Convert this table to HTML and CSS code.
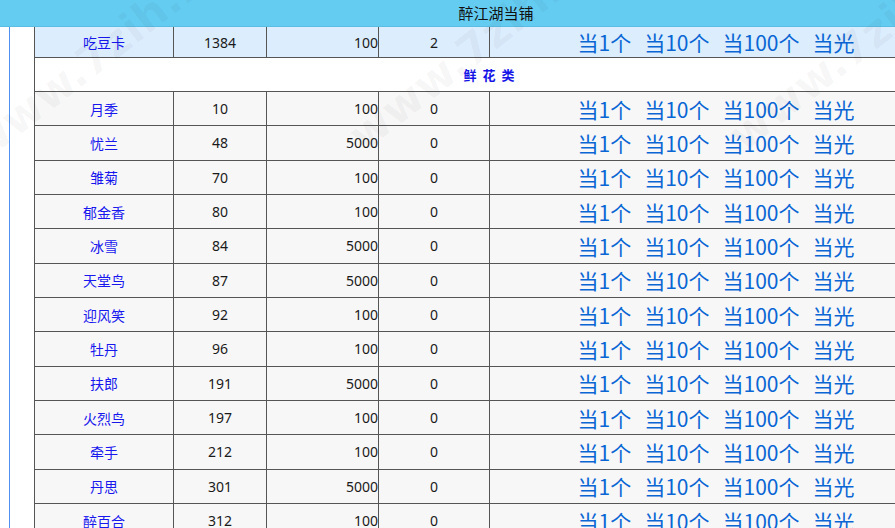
FILE: index.html
```html
<!DOCTYPE html>
<html lang="zh-CN">
<head>
<meta charset="utf-8">
<title>醉江湖当铺</title>
<link rel="stylesheet" href="styles.css">
</head>
<body>
<div class="page">
  <div class="header">醉江湖当铺</div>
  <div class="main">
    <div class="gutter"></div>
    <div class="content">
      <div class="grid">
        <div class="row row-top hl">
          <div class="cell name">吃豆卡</div><div class="cell num">1384</div><div class="cell price">100</div><div class="cell cnt">2</div>
          <div class="cell acts"><a>当1个</a><a>当10个</a><a>当100个</a><a>当光</a></div>
        </div>
        <div class="row section"><div class="sec-title">鲜 花 类</div></div>
        <div class="row"><div class="cell name">月季</div><div class="cell num">10</div><div class="cell price">100</div><div class="cell cnt">0</div><div class="cell acts"><a>当1个</a><a>当10个</a><a>当100个</a><a>当光</a></div></div>
        <div class="row"><div class="cell name">忧兰</div><div class="cell num">48</div><div class="cell price">5000</div><div class="cell cnt">0</div><div class="cell acts"><a>当1个</a><a>当10个</a><a>当100个</a><a>当光</a></div></div>
        <div class="row"><div class="cell name">雏菊</div><div class="cell num">70</div><div class="cell price">100</div><div class="cell cnt">0</div><div class="cell acts"><a>当1个</a><a>当10个</a><a>当100个</a><a>当光</a></div></div>
        <div class="row"><div class="cell name">郁金香</div><div class="cell num">80</div><div class="cell price">100</div><div class="cell cnt">0</div><div class="cell acts"><a>当1个</a><a>当10个</a><a>当100个</a><a>当光</a></div></div>
        <div class="row"><div class="cell name">冰雪</div><div class="cell num">84</div><div class="cell price">5000</div><div class="cell cnt">0</div><div class="cell acts"><a>当1个</a><a>当10个</a><a>当100个</a><a>当光</a></div></div>
        <div class="row"><div class="cell name">天堂鸟</div><div class="cell num">87</div><div class="cell price">5000</div><div class="cell cnt">0</div><div class="cell acts"><a>当1个</a><a>当10个</a><a>当100个</a><a>当光</a></div></div>
        <div class="row"><div class="cell name">迎风笑</div><div class="cell num">92</div><div class="cell price">100</div><div class="cell cnt">0</div><div class="cell acts"><a>当1个</a><a>当10个</a><a>当100个</a><a>当光</a></div></div>
        <div class="row"><div class="cell name">牡丹</div><div class="cell num">96</div><div class="cell price">100</div><div class="cell cnt">0</div><div class="cell acts"><a>当1个</a><a>当10个</a><a>当100个</a><a>当光</a></div></div>
        <div class="row"><div class="cell name">扶郎</div><div class="cell num">191</div><div class="cell price">5000</div><div class="cell cnt">0</div><div class="cell acts"><a>当1个</a><a>当10个</a><a>当100个</a><a>当光</a></div></div>
        <div class="row"><div class="cell name">火烈鸟</div><div class="cell num">197</div><div class="cell price">100</div><div class="cell cnt">0</div><div class="cell acts"><a>当1个</a><a>当10个</a><a>当100个</a><a>当光</a></div></div>
        <div class="row"><div class="cell name">牵手</div><div class="cell num">212</div><div class="cell price">100</div><div class="cell cnt">0</div><div class="cell acts"><a>当1个</a><a>当10个</a><a>当100个</a><a>当光</a></div></div>
        <div class="row"><div class="cell name">丹思</div><div class="cell num">301</div><div class="cell price">5000</div><div class="cell cnt">0</div><div class="cell acts"><a>当1个</a><a>当10个</a><a>当100个</a><a>当光</a></div></div>
        <div class="row"><div class="cell name">醉百合</div><div class="cell num">312</div><div class="cell price">100</div><div class="cell cnt">0</div><div class="cell acts"><a>当1个</a><a>当10个</a><a>当100个</a><a>当光</a></div></div>
      </div>
    </div>
  </div>
  <div class="wm wm1">www.7zih.net</div>
  <div class="wm wm2">www.7zih.net</div>
  <div class="wm wm3">www.7zih.net</div>
</div>
</body>
</html>
```

FILE: styles.css
```css
html, body {
  margin: 0;
  padding: 0;
  background: #ffffff;
  overflow: hidden;
}
body {
  font-family: "Noto Sans CJK SC", "Noto Sans", sans-serif;
}
.page {
  position: relative;
  width: 992px;
  height: 528px;
  overflow: hidden;
}
.header {
  box-sizing: border-box;
  height: 27px;
  background: #64ccf0;
  border-bottom: 1px solid #5bbde3;
  text-align: center;
  font-size: 15px;
  line-height: 26px;
  color: #111;
}
.main {
  display: flex;
  height: 501px;
}
.gutter {
  width: 9px;
  flex: none;
}
.content {
  border-left: 1px solid #4f8fef;
  padding-left: 24px;
  flex: none;
}
.grid {
  width: 910px;
  border-left: 1px solid #555;
  box-sizing: border-box;
}
.row {
  display: grid;
  grid-template-columns: 139px 93px 112px 111px 454px;
  box-sizing: border-box;
  height: 34.333px;
  border-bottom: 1px solid #555;
  background: #f7f7f7;
}
.row-top {
  height: 31px;
}
.hl {
  background: #dcedfd;
}
.section {
  display: flex;
  align-items: center;
  justify-content: center;
  height: 34px;
  background: #ffffff;
}
.sec-title {
  font-size: 13px;
  font-weight: bold;
  color: #1414e6;
  letter-spacing: 1px;
  word-spacing: 1px;
}
.cell {
  box-sizing: border-box;
  border-right: 1px solid #555;
  display: flex;
  align-items: center;
  justify-content: center;
  font-family: "Noto Sans", "DejaVu Sans", sans-serif;
  font-size: 14px;
  color: #1a1a1a;
  overflow: hidden;
  white-space: nowrap;
}
.cell.name {
  font-family: "Noto Sans CJK SC", sans-serif;
  font-size: 14px;
  color: #1717ee;
}
.cell.price {
  justify-content: flex-end;
  padding-right: 0;
}
.cell.acts {
  border-right: none;
  gap: 13px;
  padding-right: 2px;
  font-family: "Noto Sans CJK SC", sans-serif;
  font-size: 21px;
  color: #0a66d4;
}
.acts a {
  color: #0a66d4;
  text-decoration: none;
}
.wm {
  position: absolute;
  font-family: "DejaVu Sans", sans-serif;
  font-size: 44px;
  font-weight: bold;
  color: rgba(0, 0, 0, 0.035);
  white-space: nowrap;
  transform: rotate(-38deg);
  transform-origin: left bottom;
  pointer-events: none;
}
.wm1 { left: -10px; top: 120px; }
.wm2 { left: 370px; top: 110px; }
.wm3 { left: 750px; top: 110px; }
```
